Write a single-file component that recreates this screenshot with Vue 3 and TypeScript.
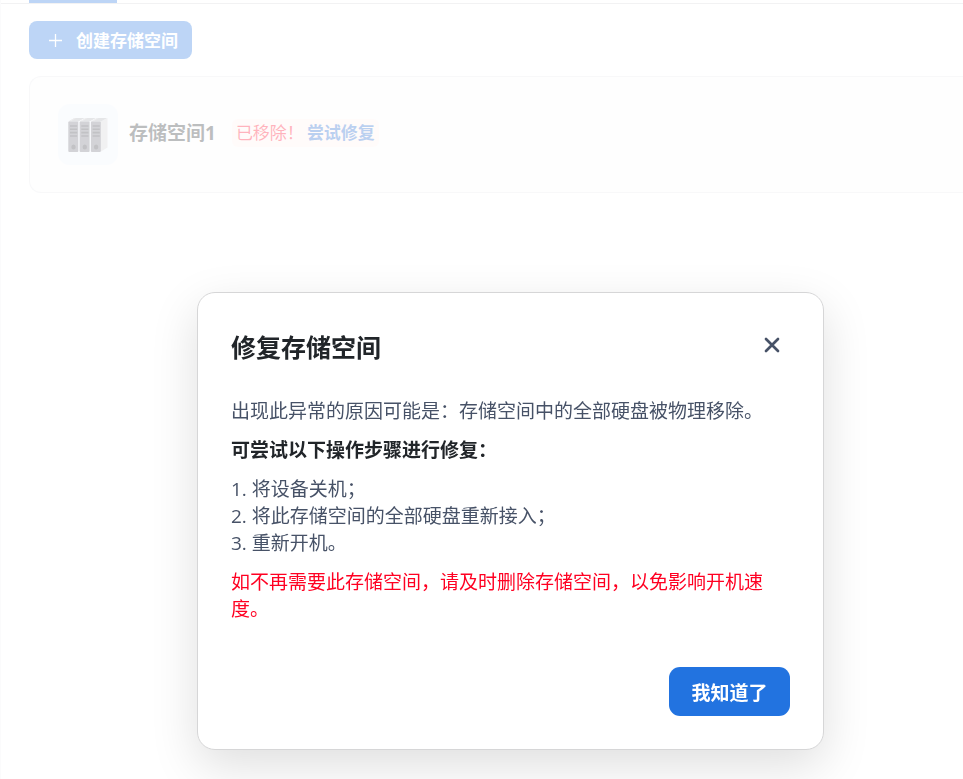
<script setup lang="ts">
import { ref } from 'vue'

interface StorageSpace {
  id: number
  name: string
  removed: boolean
}

const spaces = ref<StorageSpace[]>([{ id: 1, name: '存储空间1', removed: true }])
const steps: string[] = ['将设备关机；', '将此存储空间的全部硬盘重新接入；', '重新开机。']
const bays: number[] = [0, 11.3, 22.6]
const dialogOpen = ref(true)
</script>

<template>
  <div class="page">
    <nav class="tabs"><span class="tab-active"></span></nav>
    <main class="content">
      <button class="create" type="button">
        <svg width="13" height="13" viewBox="0 0 13 13" aria-hidden="true">
          <path d="M6.5 0V13M0 6.5H13" stroke="currentColor" stroke-width="1.3" />
        </svg>
        <span>创建存储空间</span>
      </button>
      <section v-for="space in spaces" :key="space.id" class="card">
        <div class="thumb">
          <svg width="40" height="36" viewBox="0 0 40 36" aria-hidden="true">
            <path d="M33 4.500L39.500 1V30.500L33 34.500Z" fill="#cfd0d3" />
            <g v-for="x in bays" :key="x" :transform="`translate(${x} 0)`">
              <path d="M0.500 4.500L6.500 1H16.500L10.500 4.500Z" fill="#a9abb1" />
              <path d="M0.500 4.500L6.500 1H8L2.500 4.500Z" fill="#c4c5ca" />
              <rect x="0.300" y="4.500" width="10" height="30.500" rx="1" fill="#6b6d78" />
              <path d="M2 9H9.200M2 12.200H9.200M2 15.600H9.200M2 19H9.200" stroke="#34343f" stroke-width="1.600" />
              <ellipse cx="5.500" cy="30" rx="2.200" ry="2.500" fill="#34343f" />
            </g>
          </svg>
        </div>
        <div class="info">
          <h2 class="name">{{ space.name }}</h2>
          <p v-if="space.removed" class="alert">
            <span>已移除！</span>
            <a href="#repair" @click.prevent="dialogOpen = true">尝试修复</a>
          </p>
        </div>
      </section>
    </main>

    <div v-if="dialogOpen" class="overlay">
      <div class="dialog" role="dialog" aria-modal="true" aria-labelledby="repair-title">
        <header class="dialog-head">
          <h1 id="repair-title">修复存储空间</h1>
          <button class="close" type="button" aria-label="关闭" @click="dialogOpen = false">
            <svg width="16" height="16" viewBox="0 0 16 16" aria-hidden="true">
              <path d="M2 2L14 14M14 2L2 14" stroke="currentColor" stroke-width="2.700" stroke-linecap="round" />
            </svg>
          </button>
        </header>
        <div class="dialog-body">
          <p>出现此异常的原因可能是：存储空间中的全部硬盘被物理移除。</p>
          <p class="lead">可尝试以下操作步骤进行修复：</p>
          <div>
            <p v-for="(step, i) in steps" :key="i">{{ i + 1 }}. {{ step }}</p>
          </div>
          <p class="warning">如不再需要此存储空间，请及时删除存储空间，以免影响开机速度。</p>
        </div>
        <footer class="dialog-foot">
          <button class="confirm" type="button" @click="dialogOpen = false">我知道了</button>
        </footer>
      </div>
    </div>
  </div>
</template>

<style>
body {
  background: #fefefe;
}
</style>

<style scoped>
.page {
  min-height: 100vh;
  box-sizing: border-box;
  border-left: 1px solid #f2f2f4;
  overflow: hidden;
  font-family: "Open Sans", "Noto Sans CJK SC", sans-serif;
  color: #212529;
}
h1,
h2,
p {
  margin: 0;
}
button {
  border: 0;
  font-family: inherit;
  font-weight: 700;
  cursor: pointer;
}
.tabs {
  display: flex;
  height: 3px;
  padding-left: 28px;
  border-bottom: 1px solid #d2d3d6;
}
.tab-active {
  width: 88px;
  background: #2273e0;
}
.content {
  padding: 17px 0 0 28px;
}
.create {
  display: flex;
  align-items: center;
  gap: 14px;
  height: 38px;
  padding: 0 14px 0 20px;
  border-radius: 8px;
  background: #2273e0;
  color: #fff;
  font-size: 17px;
}
.create span {
  padding-bottom: 2px;
}
.card {
  display: flex;
  align-items: center;
  margin-top: 17px;
  padding: 27px 28px;
  border: 1px solid #e6e7ec;
  border-right: 0;
  border-radius: 12px 0 0 12px;
  background: #fafafb;
}
.thumb {
  display: flex;
  align-items: center;
  justify-content: center;
  width: 60px;
  height: 61px;
  border-radius: 12px;
  background: #eef3fb;
}
.info {
  display: flex;
  align-items: center;
  gap: 16px;
  padding: 0 0 4px 11px;
}
.name {
  font-size: 19px;
  line-height: 28px;
}
.alert {
  display: flex;
  gap: 3px;
  padding: 0 4px;
  border-radius: 6px;
  background: #fff0ef;
  color: #ff0022;
  font-size: 17px;
  line-height: 28px;
}
.alert a {
  color: #1a63cc;
  font-weight: 700;
  text-decoration: none;
}
.overlay {
  position: fixed;
  inset: 0;
  display: flex;
  align-items: flex-start;
  justify-content: center;
  padding: 292px 0 0 58px;
  background: rgba(255, 255, 255, 0.7);
}
.dialog {
  box-sizing: border-box;
  width: 100%;
  max-width: 627px;
  padding: 36px 33px 33px;
  border: 1px solid #d6d6d7;
  border-radius: 18px;
  background: #fff;
  box-shadow: 0 16px 48px rgba(0, 0, 0, 0.13);
}
.dialog-head {
  display: flex;
  align-items: flex-start;
  justify-content: space-between;
}
.dialog-head h1 {
  font-size: 25px;
  line-height: 36px;
}
.close {
  display: flex;
  align-items: center;
  justify-content: center;
  width: 36px;
  height: 32px;
  padding: 0;
  background: none;
  color: #475267;
}
.dialog-body {
  display: flex;
  flex-direction: column;
  gap: 12px;
  padding: 33px 12px 0 0;
  color: #475267;
  font-size: 19px;
  line-height: 27px;
}
.lead {
  color: #212529;
  font-weight: 700;
}
.warning {
  color: #ff0022;
}
.dialog-foot {
  display: flex;
  justify-content: flex-end;
  padding-top: 44px;
}
.confirm {
  min-width: 121px;
  height: 49px;
  padding: 0 22px;
  border-radius: 11px;
  background: #2273e0;
  color: #fff;
  font-size: 19px;
}
</style>
